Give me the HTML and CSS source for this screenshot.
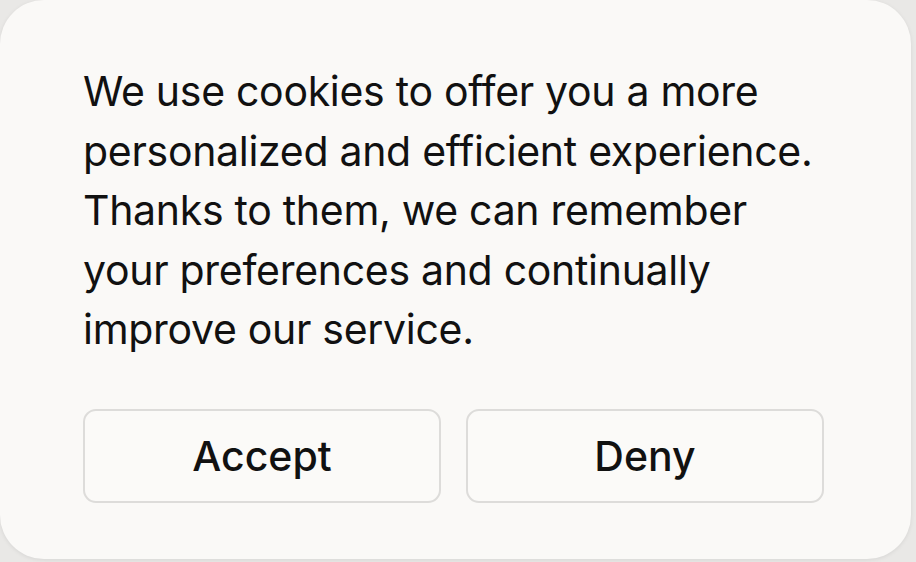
FILE: index.html
```html
<!DOCTYPE html>
<html lang="en">
<head>
<meta charset="utf-8">
<title>Cookies</title>
<link rel="stylesheet" href="styles.css">
</head>
<body>
<div class="card">
  <p class="message">We use cookies to offer you a more personalized and efficient experience. Thanks to them, we can remember your preferences and continually improve our service.</p>
  <div class="actions">
    <button class="btn">Accept</button>
    <button class="btn">Deny</button>
  </div>
</div>
</body>
</html>
```
FILE: styles.css
```css
html, body {
  margin: 0;
  padding: 0;
  background: #e9e8e6;
  width: 916px;
  height: 562px;
  overflow: hidden;
}
.card {
  box-sizing: border-box;
  width: 911px;
  height: 559px;
  background: #faf9f7;
  border-radius: 44px;
  box-shadow: 0 1px 4px rgba(0,0,0,0.08);
  padding: 62px 87px 0 83px;
  font-family: Inter, "Liberation Sans", sans-serif;
  color: #111;
}
.message {
  margin: 0;
  font-size: 41px;
  line-height: 59.5px;
  letter-spacing: -0.3px;
  width: 745px;
}
.actions {
  display: grid;
  grid-template-columns: 1fr 1fr;
  gap: 25px;
  margin-top: 49px;
}
.btn {
  height: 94px;
  background: #fbfaf8;
  border: 2px solid #dddcda;
  border-radius: 13px;
  font-family: Inter, "Liberation Sans", sans-serif;
  font-size: 41px;
  font-weight: 500;
  color: #111;
  padding: 0;
}
```
